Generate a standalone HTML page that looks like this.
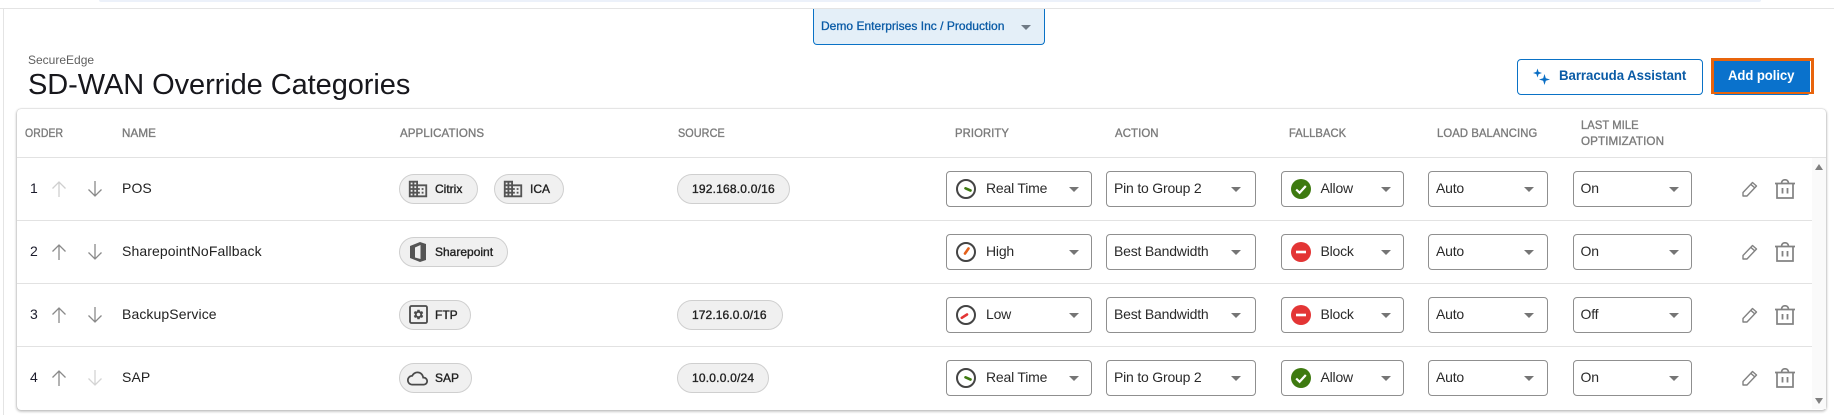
<!DOCTYPE html>
<html><head><meta charset="utf-8"><style>
*{box-sizing:border-box;margin:0;padding:0}
html,body{width:1834px;height:415px;overflow:hidden;background:#fff;font-family:"Liberation Sans",sans-serif}
.a{position:absolute;white-space:nowrap}
.th{position:absolute;top:126px;font-size:12px;line-height:14px;color:#7b7b7b;font-weight:400;letter-spacing:.1px;-webkit-text-stroke:.35px #7b7b7b;white-space:nowrap;transform-origin:left center;transform:scaleX(.94)}
.row{position:absolute;left:17px;top:0;width:1795px;height:63px;border-bottom:1px solid #e2e2e2}
.row>*{position:absolute}
.n{left:13px;top:22px;font-size:14px;line-height:16px;color:#1c1c2c}
.nm{left:105px;top:22px;font-size:14px;line-height:16px;color:#222;letter-spacing:.1px;white-space:nowrap}
.chip{top:16px;height:30px;border:1px solid #cfcfcf;border-radius:15px;background:#f0f0f0;font-size:12px;line-height:28px;color:#222;-webkit-text-stroke:.35px #222;white-space:nowrap}
.chip span{position:absolute;top:0}
.chip .ip{letter-spacing:.2px}
.chip svg{position:absolute}
.sel{top:13px;height:36px;border:1px solid #8f8f8f;border-radius:4px;background:#fff;font-size:14px;line-height:33px;color:#2a2a2a;letter-spacing:-.2px;white-space:nowrap}
.sel span{position:absolute;top:0}
.sel i{position:absolute;top:15px;width:0;height:0;border-left:5px solid transparent;border-right:5px solid transparent;border-top:5px solid #757575}
.sel svg{position:absolute;top:7px;left:9px}
.ar{top:22px;width:16px;height:18px}
.nd{fill:none;stroke-width:2.600;stroke-linecap:round}
</style></head><body>
<svg width="0" height="0" style="position:absolute">
<symbol id="up" viewBox="0 0 16 18"><path d="M8 17V2M1.500 8.500 8 2l6.500 6.500" fill="none" stroke="currentColor" stroke-width="1.300"/></symbol>
<symbol id="dn" viewBox="0 0 16 18"><path d="M8 1v15M1.500 9.500 8 16l6.500-6.500" fill="none" stroke="currentColor" stroke-width="1.300"/></symbol>
<symbol id="dom" viewBox="0 0 24 24"><path fill="#555" d="M12 7V3H2v18h20V7H12zM6 19H4v-2h2v2zm0-4H4v-2h2v2zm0-4H4V9h2v2zm0-4H4V5h2v2zm4 12H8v-2h2v2zm0-4H8v-2h2v2zm0-4H8V9h2v2zm0-4H8V5h2v2zm10 12h-8v-2h2v-2h-2v-2h2v-2h-2V9h8v10zm-2-8h-2v2h2v-2zm0 4h-2v2h2v-2z"/></symbol>
<symbol id="pen" viewBox="0 0 16 16"><path d="M1 11.500 10.500 1.500l4 3.500L5 15H1z" fill="none" stroke="#828282" stroke-width="1.400" stroke-linejoin="round"/><path d="M8.800 3.300l4 3.600" stroke="#828282" stroke-width="1.400"/></symbol>
<symbol id="tr" viewBox="0 0 20 20"><g fill="none" stroke="#828282" stroke-width="1.700"><path d="M0 4.500h20M2 4.500V19h16V4.500M6.500 4.500C6.500 2 8 .8 10 .8s3.500 1.200 3.500 3.700"/><path d="M7.500 9v5.500M12.500 9v5.500" stroke-width="1.800"/></g></symbol>
<symbol id="ok" viewBox="0 0 20 20"><circle cx="10" cy="10" r="10" fill="#3e7a10"/><path d="M5.200 10.500l3.400 3.300 6.200-6.800" fill="none" stroke="#fff" stroke-width="2.200"/></symbol>
<symbol id="no" viewBox="0 0 20 20"><circle cx="10" cy="10" r="10" fill="#e33535"/><rect x="5" y="8.700" width="10" height="2.600" fill="#fff"/></symbol>
<symbol id="ga" viewBox="0 0 20 20"><circle cx="10" cy="10" r="9" fill="none" stroke="#444" stroke-width="2"/></symbol>
</svg>

<div class="a" style="left:99px;top:0;width:1662px;height:2px;background:#ecf1fa;border-radius:0 0 4px 4px"></div>
<div class="a" style="left:0;top:8px;width:1834px;height:1px;background:#e4e4e4"></div>
<div class="a" style="left:3px;top:8px;width:1px;height:407px;background:#e4e4e4"></div>

<div class="a" style="left:813px;top:9px;width:232px;height:36px;background:#e4eff8;border:1px solid #0a72c6;border-top:none;border-radius:0 0 4px 4px"></div>
<div class="a" style="left:821px;top:19px;font-size:12px;line-height:15px;color:#0a5ba6;-webkit-text-stroke:.3px #0a5ba6;letter-spacing:.02px">Demo Enterprises Inc / Production</div>
<div class="a" style="left:1021px;top:25px;border-left:5px solid transparent;border-right:5px solid transparent;border-top:5px solid #6f7a85"></div>

<div class="a" style="left:28px;top:53px;font-size:12px;line-height:14px;color:#5f5f5f">SecureEdge</div>
<div class="a" style="left:28px;top:68px;font-size:29px;line-height:34px;color:#17171c;letter-spacing:-.07px">SD-WAN Override Categories</div>

<div class="a" style="left:1517px;top:59px;width:186px;height:36px;background:#fff;border:1px solid #0a72c6;border-radius:4px"></div>
<svg class="a" style="left:1533px;top:66px" width="18" height="20" viewBox="0 0 18 20"><path fill="#0a6ec4" d="M4.500 2.500 5.600 5.900 9 7 5.600 8.100 4.500 11.500 3.400 8.100 0 7 3.400 5.900z M11.500 8l1.300 4.200 4.200 1.300-4.200 1.300-1.300 4.200-1.300-4.200L6 13.500l4.200-1.300z"/></svg>
<div class="a" style="left:1559px;top:67px;font-size:14px;line-height:17px;font-weight:700;color:#0a5ba6;letter-spacing:-.05px;transform-origin:left center;transform:scaleX(.945)">Barracuda Assistant</div>
<div class="a" style="left:1713px;top:60px;width:97px;height:35px;background:#0a72cc;border-radius:0 0 3px 3px"></div>
<div class="a" style="left:1711px;top:58px;width:103px;height:36px;border:3px solid #e8640c;border-bottom-width:2px"></div>
<div class="a" style="left:1728px;top:67px;font-size:14px;line-height:17px;font-weight:700;color:#fff;letter-spacing:-.1px;transform-origin:left center;transform:scaleX(.94)">Add policy</div>

<div class="a" style="left:17px;top:109px;width:1809px;height:301px;background:#fff;border-radius:4px;box-shadow:0 1px 2px 1px rgba(0,0,0,.2),0 0 1px rgba(0,0,0,.25)"></div>
<div class="a" style="left:1812px;top:158px;width:14px;height:251px;background:#fafafa"></div>
<div class="a" style="left:1814.500px;top:164px;border-left:4.500px solid transparent;border-right:4.500px solid transparent;border-bottom:6px solid #808080"></div>
<div class="a" style="left:1814.500px;top:398px;border-left:4.500px solid transparent;border-right:4.500px solid transparent;border-top:6px solid #808080"></div>
<div class="a" style="left:17px;top:157px;width:1809px;height:1px;background:#e2e2e2"></div>

<div class="th" style="left:25px;transform:scaleX(.87)">ORDER</div>
<div class="th" style="left:122px;transform:scaleX(.97)">NAME</div>
<div class="th" style="left:400px;transform:scaleX(.96)">APPLICATIONS</div>
<div class="th" style="left:677.500px;transform:scaleX(.9)">SOURCE</div>
<div class="th" style="left:955px">PRIORITY</div>
<div class="th" style="left:1115px;transform:scaleX(.95)">ACTION</div>
<div class="th" style="left:1289px;transform:scaleX(.93)">FALLBACK</div>
<div class="th" style="left:1437px;transform:scaleX(.94)">LOAD BALANCING</div>
<div class="th" style="left:1581px;top:118px;transform:scaleX(.93)">LAST MILE</div>
<div class="th" style="left:1581px;top:134px;transform:scaleX(.97)">OPTIMIZATION</div>

<!-- ROW 1 -->
<div class="row" style="top:158px">
<div class="n">1</div>
<svg class="ar" style="left:34px;color:#cfcfcf"><use href="#up"/></svg>
<svg class="ar" style="left:70px;color:#8a8a8a"><use href="#dn"/></svg>
<div class="nm">POS</div>
<div class="chip" style="left:382px;width:79px"><svg style="left:7px;top:3px" width="22" height="22"><use href="#dom"/></svg><span style="left:35px">Citrix</span></div>
<div class="chip" style="left:477px;width:70px"><svg style="left:7px;top:3px" width="22" height="22"><use href="#dom"/></svg><span style="left:35px">ICA</span></div>
<div class="chip" style="left:660px;width:113px"><span class="ip" style="left:14px">192.168.0.0/16</span></div>
<div class="sel" style="left:929px;width:146px"><svg width="20" height="20"><use href="#ga"/><path class="nd" d="M9.500 9.300 14.500 11.500" stroke="#3e7a10"/></svg><span style="left:39px">Real Time</span><i style="left:122px"></i></div>
<div class="sel" style="left:1089px;width:150px"><span style="left:7px">Pin to Group 2</span><i style="left:124px"></i></div>
<div class="sel" style="left:1263.500px;width:123px"><svg width="20" height="20"><use href="#ok"/></svg><span style="left:39px">Allow</span><i style="left:99px"></i></div>
<div class="sel" style="left:1411px;width:120px"><span style="left:7px">Auto</span><i style="left:95px"></i></div>
<div class="sel" style="left:1555.500px;width:119px"><span style="left:7px">On</span><i style="left:95px"></i></div>
<svg style="left:1725px;top:23px" width="16" height="16"><use href="#pen"/></svg>
<svg style="left:1758px;top:21px" width="20" height="20"><use href="#tr"/></svg>
</div>

<!-- ROW 2 -->
<div class="row" style="top:221px">
<div class="n">2</div>
<svg class="ar" style="left:34px;color:#8a8a8a"><use href="#up"/></svg>
<svg class="ar" style="left:70px;color:#8a8a8a"><use href="#dn"/></svg>
<div class="nm">SharepointNoFallback</div>
<div class="chip" style="left:382px;width:109px"><svg style="left:10px;top:4px" width="16" height="20" viewBox="0 0 16 20"><path fill="#555" d="M0 4 10 0l6 2v16l-6 2-10-4z"/><path fill="#f0f0f0" d="M5 5.500 10.500 3v14L5 15.500z"/></svg><span style="left:35px">Sharepoint</span></div>
<div class="sel" style="left:929px;width:146px"><svg width="20" height="20"><use href="#ga"/><path class="nd" d="M9 11.500 12.500 6.500" stroke="#e4601a"/></svg><span style="left:39px">High</span><i style="left:122px"></i></div>
<div class="sel" style="left:1089px;width:150px"><span style="left:7px">Best Bandwidth</span><i style="left:124px"></i></div>
<div class="sel" style="left:1263.500px;width:123px"><svg width="20" height="20"><use href="#no"/></svg><span style="left:39px">Block</span><i style="left:99px"></i></div>
<div class="sel" style="left:1411px;width:120px"><span style="left:7px">Auto</span><i style="left:95px"></i></div>
<div class="sel" style="left:1555.500px;width:119px"><span style="left:7px">On</span><i style="left:95px"></i></div>
<svg style="left:1725px;top:23px" width="16" height="16"><use href="#pen"/></svg>
<svg style="left:1758px;top:21px" width="20" height="20"><use href="#tr"/></svg>
</div>

<!-- ROW 3 -->
<div class="row" style="top:284px">
<div class="n">3</div>
<svg class="ar" style="left:34px;color:#8a8a8a"><use href="#up"/></svg>
<svg class="ar" style="left:70px;color:#8a8a8a"><use href="#dn"/></svg>
<div class="nm">BackupService</div>
<div class="chip" style="left:382px;width:72px"><svg style="left:9px;top:4px" width="19" height="19" viewBox="0 0 19 19"><rect x="1" y="1" width="17" height="17" rx="1.500" fill="none" stroke="#4a4a4a" stroke-width="1.800"/><g transform="translate(3.500 3.500) scale(.5)"><path fill="#4a4a4a" d="M19.140 12.940c.04-.3.060-.61.060-.94 0-.32-.02-.64-.07-.94l2.030-1.580c.18-.14.23-.41.12-.61l-1.920-3.320c-.12-.22-.37-.29-.59-.22l-2.390.96c-.5-.38-1.030-.7-1.620-.94l-.36-2.540c-.04-.24-.24-.41-.48-.41h-3.840c-.24 0-.43.17-.47.41l-.36 2.540c-.59.24-1.130.57-1.620.94l-2.390-.96c-.22-.08-.47 0-.59.22L2.740 8.870c-.12.21-.08.47.12.61l2.030 1.580c-.05.3-.09.63-.09.94s.02.64.07.94l-2.030 1.580c-.18.14-.23.41-.12.61l1.920 3.320c.12.22.37.29.59.22l2.390-.96c.5.38 1.030.7 1.620.94l.36 2.540c.05.24.24.41.48.41h3.840c.24 0 .44-.17.47-.41l.36-2.540c.59-.24 1.130-.56 1.620-.94l2.390.96c.22.08.47 0 .59-.22l1.920-3.320c.12-.22.07-.47-.12-.61l-2.010-1.580zM12 15.600c-1.980 0-3.600-1.620-3.600-3.600s1.620-3.600 3.600-3.600 3.600 1.620 3.600 3.600-1.620 3.600-3.600 3.600z"/></g></svg><span style="left:35px">FTP</span></div>
<div class="chip" style="left:660px;width:106px"><span class="ip" style="left:14px;letter-spacing:.1px">172.16.0.0/16</span></div>
<div class="sel" style="left:929px;width:146px"><svg width="20" height="20"><use href="#ga"/><path class="nd" d="M5.800 12.800 11 9.500" stroke="#e33535"/></svg><span style="left:39px">Low</span><i style="left:122px"></i></div>
<div class="sel" style="left:1089px;width:150px"><span style="left:7px">Best Bandwidth</span><i style="left:124px"></i></div>
<div class="sel" style="left:1263.500px;width:123px"><svg width="20" height="20"><use href="#no"/></svg><span style="left:39px">Block</span><i style="left:99px"></i></div>
<div class="sel" style="left:1411px;width:120px"><span style="left:7px">Auto</span><i style="left:95px"></i></div>
<div class="sel" style="left:1555.500px;width:119px"><span style="left:7px">Off</span><i style="left:95px"></i></div>
<svg style="left:1725px;top:23px" width="16" height="16"><use href="#pen"/></svg>
<svg style="left:1758px;top:21px" width="20" height="20"><use href="#tr"/></svg>
</div>

<!-- ROW 4 -->
<div class="row" style="top:347px;border-bottom:none">
<div class="n">4</div>
<svg class="ar" style="left:34px;color:#8a8a8a"><use href="#up"/></svg>
<svg class="ar" style="left:70px;color:#d4d4d4"><use href="#dn"/></svg>
<div class="nm">SAP</div>
<div class="chip" style="left:382px;width:73px"><svg style="left:7px;top:4px" width="21" height="21" viewBox="0 0 24 24"><path fill="#4a4a4a" d="M19.350 10.040C18.670 6.590 15.640 4 12 4 9.110 4 6.600 5.640 5.350 8.040 2.340 8.360 0 10.910 0 14c0 3.310 2.690 6 6 6h13c2.760 0 5-2.240 5-5 0-2.640-2.050-4.780-4.650-4.960zM19 18H6c-2.210 0-4-1.790-4-4 0-2.050 1.530-3.760 3.560-3.970l1.070-.11.5-.95C8.080 7.140 9.940 6 12 6c2.620 0 4.880 1.860 5.390 4.430l.3 1.500 1.530.11c1.560.1 2.780 1.410 2.780 2.960 0 1.650-1.350 3-3 3z"/></svg><span style="left:35px">SAP</span></div>
<div class="chip" style="left:660px;width:92px"><span class="ip" style="left:14px">10.0.0.0/24</span></div>
<div class="sel" style="left:929px;width:146px"><svg width="20" height="20"><use href="#ga"/><path class="nd" d="M9.500 9.300 14.500 11.500" stroke="#3e7a10"/></svg><span style="left:39px">Real Time</span><i style="left:122px"></i></div>
<div class="sel" style="left:1089px;width:150px"><span style="left:7px">Pin to Group 2</span><i style="left:124px"></i></div>
<div class="sel" style="left:1263.500px;width:123px"><svg width="20" height="20"><use href="#ok"/></svg><span style="left:39px">Allow</span><i style="left:99px"></i></div>
<div class="sel" style="left:1411px;width:120px"><span style="left:7px">Auto</span><i style="left:95px"></i></div>
<div class="sel" style="left:1555.500px;width:119px"><span style="left:7px">On</span><i style="left:95px"></i></div>
<svg style="left:1725px;top:23px" width="16" height="16"><use href="#pen"/></svg>
<svg style="left:1758px;top:21px" width="20" height="20"><use href="#tr"/></svg>
</div>
</body></html>
